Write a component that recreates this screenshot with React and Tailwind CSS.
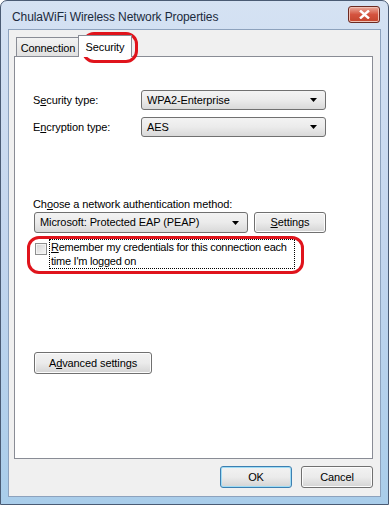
import React from "react";

const font = { fontFamily: '"Liberation Sans", Arial, sans-serif' };

const Arrow = () => (
  <svg width="7" height="4" viewBox="0 0 7 4" className="shrink-0">
    <path d="M0 0h7L3.5 4z" fill="#000" />
  </svg>
);

const Combo = ({ value, className = "" }) => (
  <div
    className={`flex items-center justify-between rounded-[3px] border border-[#707070] bg-gradient-to-b from-[#f3f3f3] via-[#ebebeb] to-[#d9d9d9] pl-[5px] pr-[8px] ${className}`}
  >
    <span>{value}</span>
    <Arrow />
  </div>
);

const Button = ({ children, className = "", isDefault }) => (
  <div
    className={`flex items-center justify-center rounded-[3px] border bg-gradient-to-b from-[#f2f2f2] via-[#ebebeb] to-[#d4d4d4] ${
      isDefault
        ? "border-[#3c7fb1] shadow-[inset_0_0_0_1px_#9fdcf5]"
        : "border-[#707070] shadow-[inset_0_0_0_1px_#fcfcfc]"
    } ${className}`}
  >
    {children}
  </div>
);

export default function App() {
  return (
    <div
      className="relative flex h-[505px] w-[389px] flex-col rounded-t-[7px] border border-[#4a5b74] bg-gradient-to-b from-[#d5e2f3] via-[#c2d5ee] to-[#a9cdea] text-[11px] tracking-[-0.1px] text-black"
      style={font}
    >
      {/* Title bar */}
      <div className="flex h-[28px] shrink-0 items-center justify-between pl-[11px] pr-[8px]">
        <span className="pt-[3px] text-[12px] text-[#1b2a3c]">
          ChulaWiFi Wireless Network Properties
        </span>
        <div className="mt-[-1px] flex h-[17px] w-[32px] items-center justify-center rounded-[3px] border border-[#6b2a22] bg-gradient-to-b from-[#e9a99c] via-[#d4533f] to-[#c4442c] shadow-[inset_0_0_0_1px_#f0c0b4]">
          <svg width="11" height="9" viewBox="0 0 11 9">
            <path
              d="M1 0.5L5.5 4.5L10 0.5M1 8.5L5.5 4.5L10 8.5"
              stroke="#fff"
              strokeWidth="2.4"
              fill="none"
            />
          </svg>
        </div>
      </div>

      {/* Client area */}
      <div className="mx-[7px] mb-[7px] flex flex-1 flex-col border border-[#8da2bd] bg-[#f0f0f0] pl-[5px] pr-[7px] pt-[5px]">
        {/* Tabs */}
        <div className="flex h-[21px] items-end pl-[2px]">
          <div className="flex h-[19px] w-[64px] items-center justify-center border border-b-0 border-[#898c95] bg-gradient-to-b from-[#f2f2f2] to-[#e1e1e1] pt-[2px]">
            Connection
          </div>
          <div className="relative z-10 -mb-px ml-[-2px] flex h-[22px] w-[54px] items-start justify-center border border-b-0 border-[#898c95] bg-white pt-[3px]">
            Security
          </div>
        </div>

        {/* Panel */}
        <div className="flex flex-1 flex-col border border-[#898c95] bg-white pl-[18px] pt-[33px]">
          <div className="flex h-[20px] items-center">
            <span className="w-[108px]">
              S<span className="underline">e</span>curity type:
            </span>
            <Combo value="WPA2-Enterprise" className="h-[20px] w-[185px]" />
          </div>
          <div className="mt-[7px] flex h-[20px] items-center">
            <span className="w-[108px]">
              E<span className="underline">n</span>cryption type:
            </span>
            <Combo value="AES" className="h-[20px] w-[185px]" />
          </div>

          <div className="mt-[60px] h-[14px] leading-[14px]">
            Ch<span className="underline">o</span>ose a network authentication
            method:
          </div>
          <div className="mt-[1px] flex items-center">
            <Combo
              value="Microsoft: Protected EAP (PEAP)"
              className="ml-px h-[21px] w-[214px]"
            />
            <Button className="ml-[6px] h-[21px] w-[72px]">
              <span>
                <span className="underline">S</span>ettings
              </span>
            </Button>
          </div>

          <div className="mt-[6px] flex items-start">
            <div className="ml-[2px] mt-[4px] h-[12px] w-[12px] border border-[#8e8f8f] bg-gradient-to-br from-[#d6d6d6] to-[#f8f8f8] shadow-[inset_0_0_0_1px_#f4f4f4]" />
            <div className="ml-[2px] w-[246px] whitespace-nowrap border border-dotted border-black pl-[1px] leading-[14px] tracking-[-0.25px]">
              <span className="underline">R</span>emember my credentials for
              this connection each
              <br />
              time I'm logged on
            </div>
          </div>

          <Button className="ml-px mt-[83px] h-[22px] w-[118px]">
            <span>
              A<span className="underline">d</span>vanced settings
            </span>
          </Button>
        </div>

        {/* Footer buttons */}
        <div className="flex h-[37px] shrink-0 items-start justify-end gap-[9px] pt-[7px]">
          <Button isDefault className="h-[22px] w-[72px]">
            OK
          </Button>
          <Button className="h-[22px] w-[72px]">Cancel</Button>
        </div>
      </div>

      {/* Red annotations */}
      <div className="pointer-events-none absolute left-[81px] top-[31px] h-[31px] w-[56px] rounded-[12px] border-[3px] border-[#e0141c]" />
      <div className="pointer-events-none absolute left-[26px] top-[235px] h-[38px] w-[277px] rounded-[12px] border-[3px] border-[#e0141c]" />
    </div>
  );
}
